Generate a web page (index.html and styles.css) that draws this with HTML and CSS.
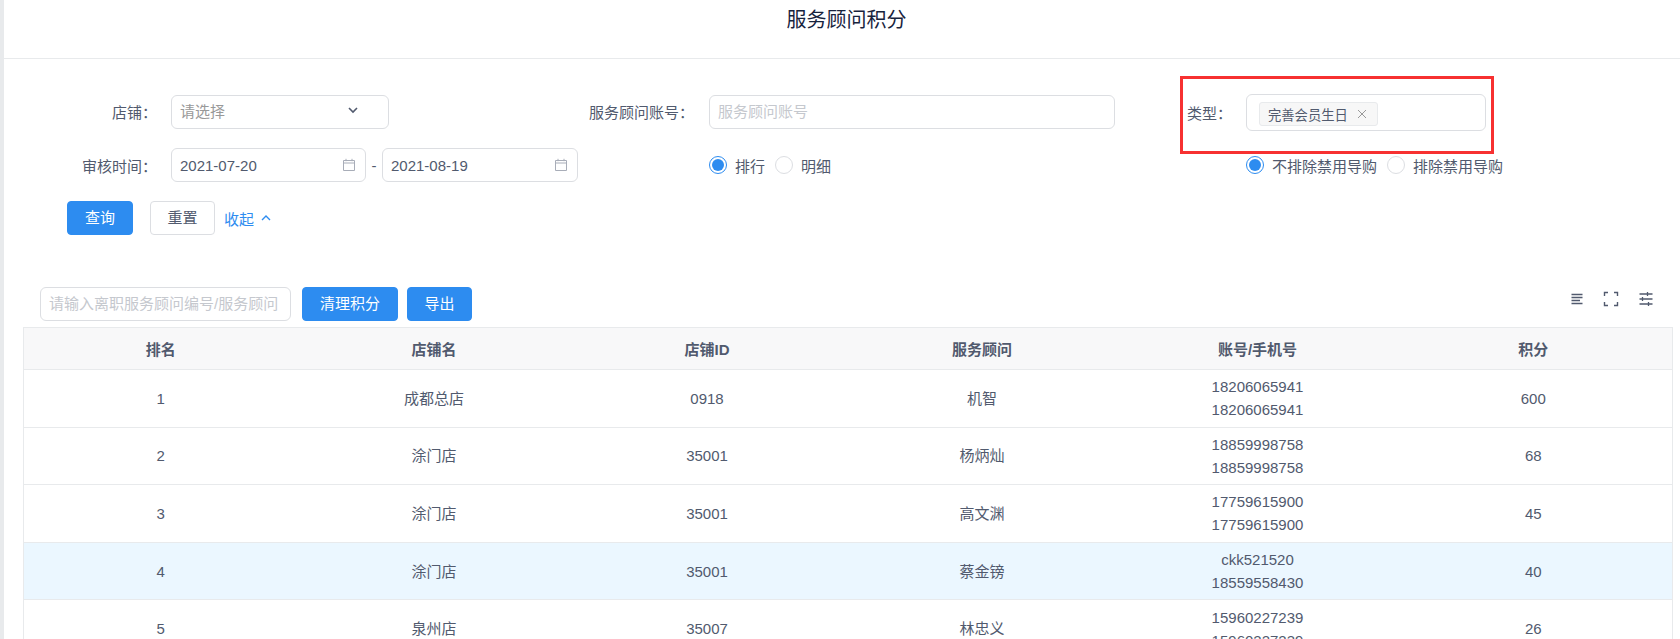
FILE: index.html
```html
<!DOCTYPE html>
<html lang="zh-CN">
<head>
<meta charset="utf-8">
<title>服务顾问积分</title>
<link rel="stylesheet" href="styles.css">
</head>
<body>
<div class="page">
  <header class="title-bar">服务顾问积分</header>
  <section class="filters">
    <div class="filter-grid">
      <label class="f-label f-label-top">店铺：</label>
      <div class="box select-short"><span class="placeholder-dark">请选择</span>
        <svg class="chev" width="14" height="14" viewBox="0 0 14 14"><path d="M3 5l4 4 4-4" fill="none" stroke="#515a6e" stroke-width="1.6"/></svg>
      </div>
      <label class="f-label f-label-top f-label-account">服务顾问账号：</label>
      <div class="box"><span class="placeholder">服务顾问账号</span></div>
      <label class="f-label f-label-type">类型：</label>
      <div class="box box-tag"><span class="tag">完善会员生日<svg class="tag-x" width="10" height="10" viewBox="0 0 10 10"><path d="M1 1l8 8M9 1l-8 8" stroke="#999" stroke-width="1" fill="none"/></svg></span></div>

      <label class="f-label">审核时间：</label>
      <div class="date-range">
        <div class="box date"><span>2021-07-20</span>
          <svg class="cal" width="14" height="14" viewBox="0 0 14 14"><path d="M1.5 2.5h11v10h-11zM1.5 5h11M4 .8v2.4M10 .8v2.4" fill="none" stroke="#a8adb8" stroke-width="1"/></svg>
        </div>
        <span class="dash">-</span>
        <div class="box date date-end"><span>2021-08-19</span>
          <svg class="cal" width="14" height="14" viewBox="0 0 14 14"><path d="M1.5 2.5h11v10h-11zM1.5 5h11M4 .8v2.4M10 .8v2.4" fill="none" stroke="#a8adb8" stroke-width="1"/></svg>
        </div>
      </div>
      <span></span>
      <div class="radios">
        <span class="radio on"></span><span class="r-text">排行</span>
        <span class="radio"></span><span class="r-text">明细</span>
      </div>
      <span></span>
      <div class="radios">
        <span class="radio on"></span><span class="r-text">不排除禁用导购</span>
        <span class="radio"></span><span class="r-text">排除禁用导购</span>
      </div>
    </div>
    <div class="actions">
      <button class="btn primary btn-query">查询</button>
      <button class="btn btn-reset">重置</button>
      <a class="collapse">收起<svg width="12" height="12" viewBox="0 0 12 12"><path d="M2 8l4-4 4 4" fill="none" stroke="#2d8cf0" stroke-width="1.4"/></svg></a>
    </div>
    <div class="red-mark"></div>
  </section>
  <section class="toolbar">
    <div class="box search"><span class="placeholder">请输入离职服务顾问编号/服务顾问</span></div>
    <button class="btn primary btn-clear">清理积分</button>
    <button class="btn primary btn-export">导出</button>
    <div class="tools">
      <svg width="14" height="14" viewBox="0 0 14 14"><path d="M1.500 2.500h11M1.500 5.500h11M1.500 8.500h8.500M1.500 11.500h11" stroke="#515a6e" stroke-width="1.300" fill="none"/></svg>
      <svg width="16" height="16" viewBox="0 0 16 16"><path d="M5 1.500H1.500V5M11 1.500h3.500V5M5 14.500H1.500V11M11 14.500h3.500V11" stroke="#515a6e" stroke-width="1.400" fill="none"/></svg>
      <svg width="16" height="16" viewBox="0 0 16 16"><path d="M1.500 3h13M1.500 8h13M1.500 13h13M9.500 1v4M4.500 6v4M10.500 11v4" stroke="#515a6e" stroke-width="1.300" fill="none"/></svg>
    </div>
  </section>
  <table class="grid">
    <colgroup><col class="c1"><col class="c2"><col class="c3"><col class="c4"><col class="c5"><col class="c6"></colgroup>
    <thead><tr><th>排名</th><th>店铺名</th><th>店铺ID</th><th>服务顾问</th><th>账号/手机号</th><th>积分</th></tr></thead>
    <tbody>
      <tr><td>1</td><td>成都总店</td><td>0918</td><td>机智</td><td>18206065941<br>18206065941</td><td>600</td></tr>
      <tr><td>2</td><td>涂门店</td><td>35001</td><td>杨炳灿</td><td>18859998758<br>18859998758</td><td>68</td></tr>
      <tr><td>3</td><td>涂门店</td><td>35001</td><td>高文渊</td><td>17759615900<br>17759615900</td><td>45</td></tr>
      <tr class="hl"><td>4</td><td>涂门店</td><td>35001</td><td>蔡金镑</td><td>ckk521520<br>18559558430</td><td>40</td></tr>
      <tr><td>5</td><td>泉州店</td><td>35007</td><td>林忠义</td><td>15960227239<br>15960227239</td><td>26</td></tr>
    </tbody>
  </table>
</div>
</body>
</html>
```
FILE: styles.css
```css
* { box-sizing: border-box; }
html, body { margin: 0; height: 639px; overflow: hidden; background: #fff; }
body { font-family: "Liberation Sans", "Noto Sans CJK SC", sans-serif; font-size: 15px; color: #515a6e; }
.page { height: 639px; border-left: 4px solid #e8eaec; overflow: hidden; }
.title-bar { height: 59px; border-bottom: 1px solid #e8eaec; text-align: center; font-size: 20px; line-height: 40px; color: #17233d; padding-left: 9px; }
.filters { position: relative; padding-top: 35px; height: 228px; }
.filter-grid { display: grid; grid-template-columns: 167px 407px 131px 406px 131px 240px; grid-template-rows: 36px 34px; row-gap: 18px; align-items: center; }
.f-label { text-align: right; padding-right: 14px; white-space: nowrap; }
.f-label-top { padding-bottom: 1px; }
.f-label-account { padding-right: 15px; }
.f-label-type { text-align: left; padding-left: 72px; padding-right: 0; }
.box { height: 34px; border: 1px solid #dcdee2; border-radius: 6px; background: #fff; display: flex; align-items: center; padding: 0 8px; position: relative; }
.select-short { width: 218px; }
.box-tag { height: 37px; padding-left: 12px; align-self: start; }
.placeholder { color: #c5c8ce; white-space: nowrap; overflow: hidden; padding-bottom: 3px; }
.placeholder-dark { color: #999; padding-bottom: 3px; }
.chev { position: absolute; right: 28px; top: 7px; }
.tag { display: inline-flex; align-items: center; height: 24px; width: 119px; margin-top: 3px; padding-left: 8px; background: #f7f7f7; border: 1px solid #e8eaec; border-radius: 3px; font-size: 13.3px; }
.tag-x { margin-left: 9px; }
.date-range { display: flex; align-items: center; }
.date { width: 195px; justify-content: space-between; padding-right: 9px; }
.date-end { width: 196px; }
.dash { width: 16px; text-align: center; }
.radios { display: flex; align-items: center; }
.radio { width: 18px; height: 18px; border-radius: 50%; border: 1px solid #dcdee2; background: #fff; position: relative; flex: none; }
.radio.on { border-color: #2d8cf0; }
.radio.on::after { content: ""; position: absolute; left: 2px; top: 2px; width: 12px; height: 12px; border-radius: 50%; background: #2d8cf0; }
.r-text { margin: 0 10px 0 8px; white-space: nowrap; }
.actions { display: flex; align-items: center; padding-left: 63px; margin-top: 19px; }
.btn { height: 34px; border-radius: 4px; font: inherit; border: 1px solid #dcdee2; background: #fff; color: #515a6e; padding: 0 0 3px; }
.btn.primary { background: #2d8cf0; border-color: #2d8cf0; color: #fff; }
.btn-query { width: 66px; }
.btn-reset { width: 65px; margin-left: 17px; }
.collapse { color: #2d8cf0; margin-left: 9px; display: inline-flex; align-items: center; gap: 6px; }
.red-mark { position: absolute; left: 1176px; top: 17px; width: 314px; height: 78px; border: 3px solid #f73131; pointer-events: none; }
.toolbar { display: flex; align-items: center; height: 34px; padding-left: 36px; padding-right: 26px; }
.search { width: 251px; overflow: hidden; }
.btn-clear { width: 96px; margin-left: 11px; }
.btn-export { width: 65px; margin-left: 9px; }
.tools { margin-left: auto; display: flex; align-items: center; gap: 19px; align-self: flex-start; margin-top: 4px; }
.grid { border-collapse: collapse; table-layout: fixed; width: 1649px; margin: 6px 0 0 19px; border: 1px solid #e8eaec; text-align: center; }
.c1 { width: 274px; } .c2 { width: 273px; } .c3 { width: 273px; } .c4 { width: 277px; } .c5 { width: 274px; } .c6 { width: 278px; }
.grid th { height: 42px; background: #f8f8f9; font-weight: 700; border-bottom: 1px solid #e8eaec; }
.grid td { height: 57.6px; border-bottom: 1px solid #e8eaec; line-height: 23px; padding: 0; }
.grid .hl td { background: #ebf7ff; }
```
